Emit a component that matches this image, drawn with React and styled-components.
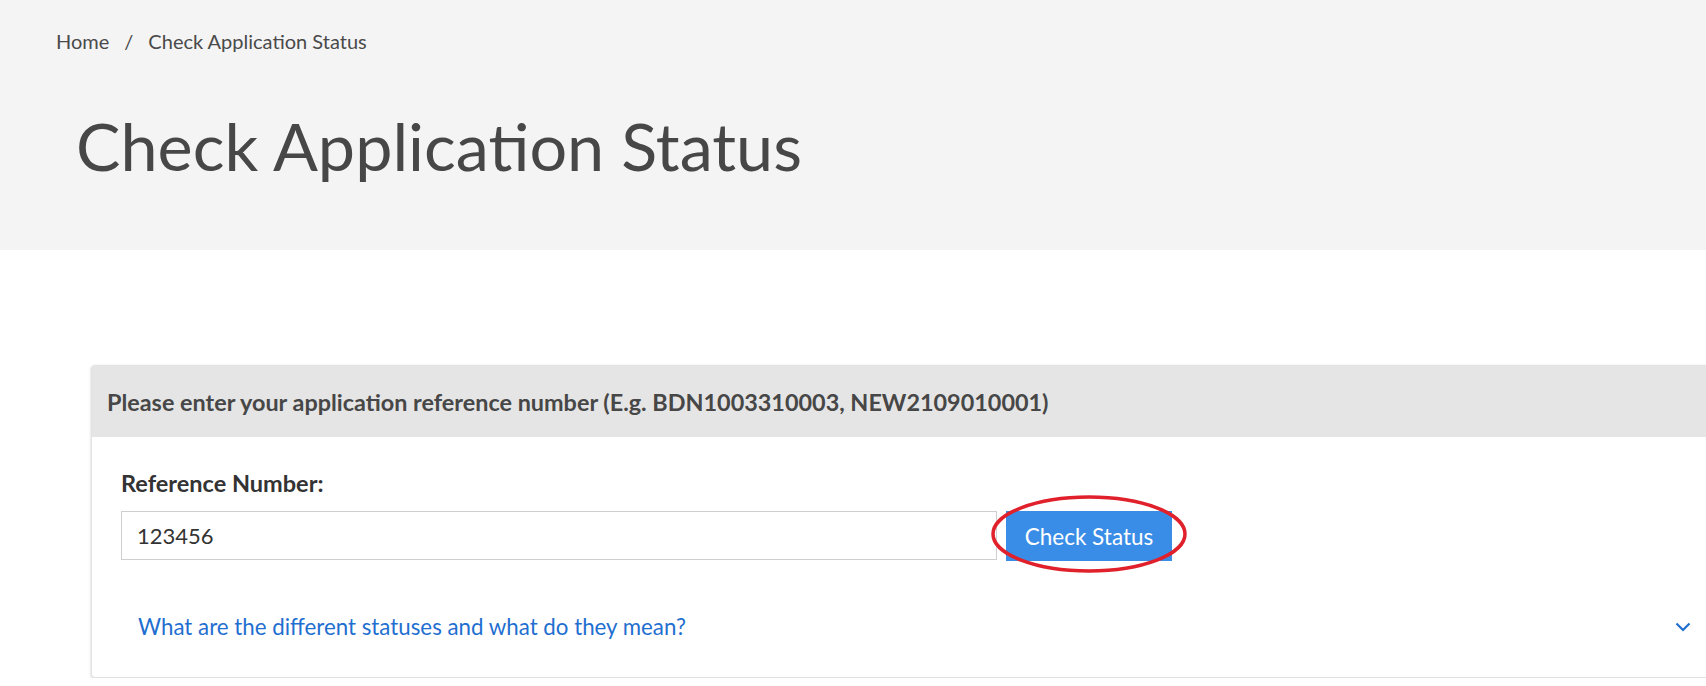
import React from 'react';
import styled, { createGlobalStyle } from 'styled-components';

const GlobalStyle = createGlobalStyle`
  body {
    margin: 0;
    background: #ffffff;
    font-family: Lato, "Open Sans", sans-serif;
    color: #444444;
    overflow: hidden;
  }
`;

const Hero = styled.header`
  background: #f4f4f4;
  height: 250px;
  box-sizing: border-box;
  padding: 28px 0 0 56px;
`;

const Crumbs = styled.nav`
  display: flex;
  gap: 15px;
  font-size: 20px;
  line-height: 26px;
  color: #4a4a4a;
`;

const Title = styled.h1`
  margin: 52px 0 0 20px;
  font-size: 66.5px;
  font-weight: 400;
  line-height: 1.2;
  color: #474747;
`;

const Main = styled.main`
  padding: 115px 0 0 91px;
`;

const Card = styled.section`
  width: 1644px;
  border: 1px solid #e2e2e2;
  border-radius: 4px;
  box-shadow: 0 1px 3px rgba(0, 0, 0, 0.18);
  background: #fff;
`;

const CardHead = styled.div`
  height: 71px;
  display: flex;
  align-items: center;
  padding: 0 15px;
  background: #e5e5e5;
  font-size: 23.4px;
  font-weight: 700;
  color: #474747;
`;

const CardBody = styled.div`
  padding: 34px 29px 37px;
`;

const Label = styled.label`
  display: block;
  font-size: 23.5px;
  font-weight: 700;
  line-height: 24px;
  color: #333;
`;

const Row = styled.div`
  display: flex;
  align-items: flex-start;
  gap: 9px;
  margin-top: 16px;
`;

const Input = styled.input`
  width: 876px;
  height: 49px;
  box-sizing: border-box;
  border: 1px solid #cfcfcf;
  padding: 0 15px;
  font-family: inherit;
  font-size: 22px;
  color: #333;
  outline: none;
`;

const ButtonWrap = styled.div`
  position: relative;
`;

const Button = styled.button`
  width: 166px;
  height: 50px;
  border: none;
  background: #3a8de6;
  color: #fff;
  font-family: inherit;
  font-size: 22.5px;
`;

const Circle = styled.svg`
  position: absolute;
  left: -16px;
  top: -18px;
  pointer-events: none;
`;

const Accordion = styled.div`
  display: flex;
  align-items: center;
  justify-content: space-between;
  margin-top: 53px;
  padding: 0 16px 0 17px;
  line-height: 26px;
`;

const Question = styled.a`
  font-size: 22.3px;
  color: #1f6fd0;
  text-decoration: none;
`;

export default function App() {
  return (
    <>
      <GlobalStyle />
      <Hero>
        <Crumbs>
          <span>Home</span>
          <span>/</span>
          <span>Check Application Status</span>
        </Crumbs>
        <Title>Check Application Status</Title>
      </Hero>
      <Main>
        <Card>
          <CardHead>Please enter your application reference number (E.g. BDN1003310003, NEW2109010001)</CardHead>
          <CardBody>
            <Label>Reference Number:</Label>
            <Row>
              <Input defaultValue="123456" />
              <ButtonWrap>
                <Button>Check Status</Button>
                <Circle width="200" height="82" viewBox="0 0 200 82">
                  <ellipse cx="99" cy="41" rx="96" ry="37" fill="none" stroke="#e0202a" strokeWidth="3.5" />
                </Circle>
              </ButtonWrap>
            </Row>
            <Accordion>
              <Question href="#">What are the different statuses and what do they mean?</Question>
              <svg width="16" height="10" viewBox="0 0 16 10">
                <path d="M1.5 1.5 L8 8 L14.5 1.5" fill="none" stroke="#1f6fd0" strokeWidth="2.2" />
              </svg>
            </Accordion>
          </CardBody>
        </Card>
      </Main>
    </>
  );
}
